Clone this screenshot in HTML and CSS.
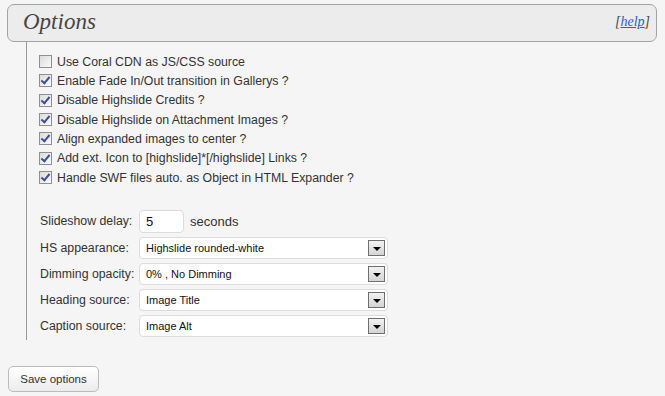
FILE: index.html
```html
<!DOCTYPE html>
<html>
<head>
<meta charset="utf-8">
<link rel="stylesheet" href="styles.css">
</head>
<body>
<div class="postbox">
  <div class="head">
    <h3 class="title">Options</h3>
    <span class="help">[<a href="#">help</a>]</span>
  </div>
  <div class="inside">
    <ul class="checks">
      <li><span class="cb"></span>Use Coral CDN as JS/CSS source</li>
      <li><span class="cb on"></span>Enable Fade In/Out transition in Gallerys ?</li>
      <li><span class="cb on"></span>Disable Highslide Credits ?</li>
      <li><span class="cb on"></span>Disable Highslide on Attachment Images ?</li>
      <li><span class="cb on"></span>Align expanded images to center ?</li>
      <li><span class="cb on"></span>Add ext. Icon to [highslide]*[/highslide] Links ?</li>
      <li><span class="cb on"></span>Handle SWF files auto. as Object in HTML Expander ?</li>
    </ul>
    <div class="fields">
      <div class="row first">
        <span class="lbl">Slideshow delay:</span>
        <span class="num">5</span>
        <span class="unit">seconds</span>
      </div>
      <div class="row">
        <span class="lbl">HS appearance:</span>
        <span class="select"><span class="val">Highslide rounded-white</span><span class="arrow"></span></span>
      </div>
      <div class="row">
        <span class="lbl">Dimming opacity:</span>
        <span class="select"><span class="val">0% , No Dimming</span><span class="arrow"></span></span>
      </div>
      <div class="row">
        <span class="lbl">Heading source:</span>
        <span class="select"><span class="val">Image Title</span><span class="arrow"></span></span>
      </div>
      <div class="row">
        <span class="lbl">Caption source:</span>
        <span class="select"><span class="val">Image Alt</span><span class="arrow"></span></span>
      </div>
    </div>
  </div>
</div>
<button class="save">Save options</button>
</body>
</html>
```
FILE: styles.css
```css
html, body {
  margin: 0;
  padding: 0;
  background: #f5f5f5;
  font-family: "Liberation Sans", Arial, sans-serif;
  color: #333;
}
.postbox {
  margin: 4px 0 0 7px;
  width: 650px;
}
.head {
  box-sizing: border-box;
  height: 38px;
  border: 1px solid #a3a3a3;
  border-radius: 7px;
  background: #ececec;
  display: flex;
  align-items: center;
  justify-content: space-between;
  padding: 0 6px 0 15px;
}
.title {
  margin: 0;
  font-family: "Liberation Serif", "Times New Roman", serif;
  font-style: italic;
  font-weight: normal;
  font-size: 23px;
  color: #464646;
  padding-bottom: 2px;
}
.help {
  font-family: "Liberation Serif", serif;
  font-style: italic;
  font-size: 14px;
  color: #464646;
  padding-bottom: 2px;
}
.help a {
  color: #2165c6;
  text-decoration: underline;
}
.inside {
  margin-left: 19px;
  border-left: 1px solid #999;
  padding: 10px 0 3px 12px;
}
.checks {
  list-style: none;
  margin: 0;
  padding: 0;
}
.checks li {
  height: 19.33px;
  display: flex;
  align-items: center;
  font-size: 12.3px;
}
.cb {
  box-sizing: border-box;
  width: 13px;
  height: 13px;
  border: 1px solid #8f8f8f;
  background: linear-gradient(135deg, #dcdcdc, #fafafa);
  margin-right: 5px;
  flex: none;
  position: relative;
}
.cb.on::after {
  content: "";
  position: absolute;
  left: 3px;
  top: 0px;
  width: 3px;
  height: 7px;
  border: solid #3b4f9a;
  border-width: 0 2px 2px 0;
  transform: rotate(40deg);
}
.fields {
  margin-top: 22px;
  display: flex;
  flex-direction: column;
  gap: 4px;
}
.row {
  display: flex;
  align-items: center;
  height: 22px;
  font-size: 12.3px;
}
.row.first {
  height: 24px;
}
.lbl {
  width: 99px;
  flex: none;
  padding-left: 1px;
}
.num {
  box-sizing: border-box;
  width: 45px;
  height: 23px;
  border: 1px solid #dcdcdc;
  border-radius: 4px;
  background: #fff;
  display: flex;
  align-items: center;
  padding-left: 6px;
  font-size: 13px;
  color: #111;
}
.unit {
  margin-left: 6px;
  font-size: 13px;
}
.select {
  box-sizing: border-box;
  width: 249px;
  height: 22px;
  border: 1px solid #dcdcdc;
  border-radius: 4px;
  background: #fff;
  display: flex;
  align-items: center;
  justify-content: space-between;
  padding: 0 2px 0 6px;
}
.val {
  font-size: 11px;
  color: #111;
}
.arrow {
  box-sizing: border-box;
  width: 17px;
  height: 16px;
  border: 1px solid #6f6f6f;
  background: linear-gradient(#f2f2f2, #d4d4d4);
  position: relative;
}
.arrow::after {
  content: "";
  position: absolute;
  left: 4px;
  top: 6px;
  border-left: 4px solid transparent;
  border-right: 4px solid transparent;
  border-top: 4px solid #000;
}
.save {
  margin: 26px 0 0 8px;
  width: 91px;
  height: 26px;
  border: 1px solid #bbb;
  border-radius: 5px;
  background: linear-gradient(#fff, #ececec);
  font-family: "Liberation Sans", Arial, sans-serif;
  font-size: 11.5px;
  color: #333;
  padding: 0;
}
```
